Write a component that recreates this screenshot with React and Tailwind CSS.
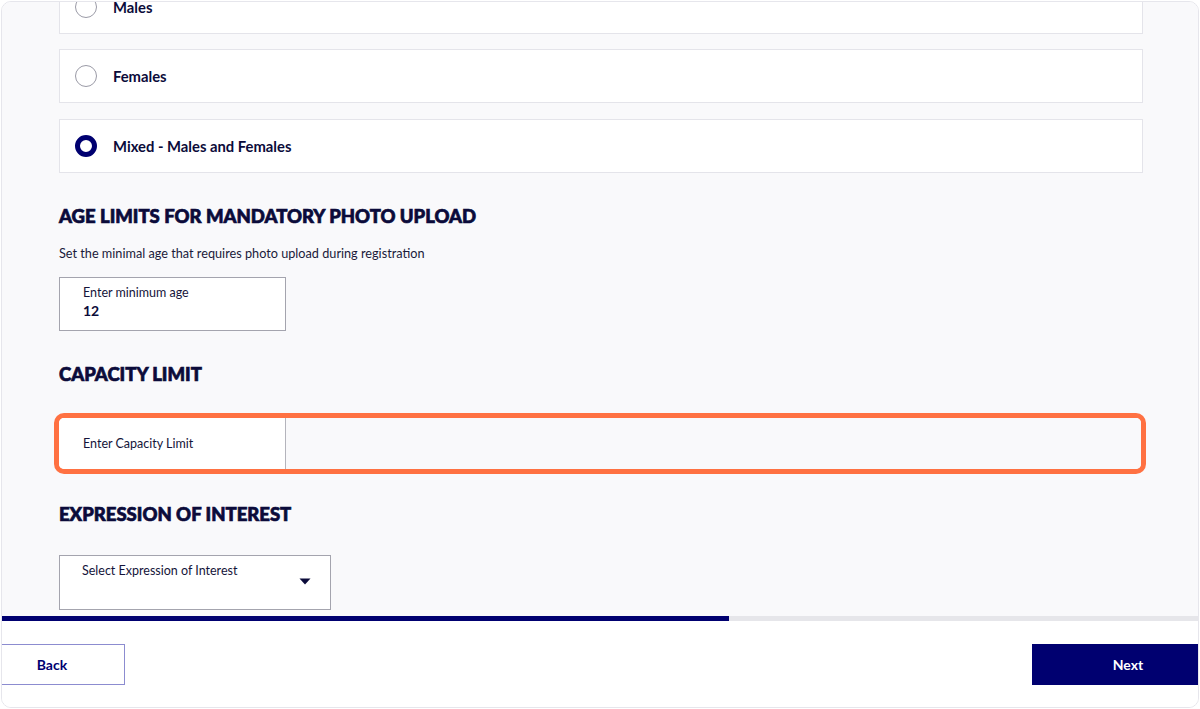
import React from "react";

const font = { fontFamily: "Lato, 'Noto Sans', 'Liberation Sans', sans-serif" };

function RadioCard({ label, selected, className = "" }) {
  return (
    <div className={`h-[54px] bg-white border border-[#e4e4ea] flex items-center pl-[15px] gap-[16px] ${className}`}>
      {selected ? (
        <span className="w-[22px] h-[22px] rounded-full border-[5px] border-[#000070] bg-white shrink-0" />
      ) : (
        <span className="w-[22px] h-[22px] rounded-full border border-[#9a9aa6] bg-white shrink-0" />
      )}
      <span className="text-[14.8px] font-bold text-[#0b0b3a] leading-none">{label}</span>
    </div>
  );
}

function Heading({ children, className = "" }) {
  return (
    <h2
      className={`text-[18.5px] leading-[24px] font-black uppercase text-[#0b0b3a] [-webkit-text-stroke:0.7px_#0b0b3a] ${className}`}
    >
      {children}
    </h2>
  );
}

export default function App() {
  return (
    <div className="w-[1200px] h-[709px] bg-white p-[1px]" style={font}>
      <div className="w-full h-full rounded-[10px] border border-[#e6e6ec] overflow-hidden flex flex-col bg-white">
        <div className="flex-1 overflow-hidden bg-[#f9f9fb] pl-[57px] pr-[55px]">
          <div className="-mt-[22px] flex flex-col">
            <RadioCard label="Males" />
            <RadioCard label="Females" className="mt-[15px]" />
            <RadioCard label="Mixed - Males and Females" selected className="mt-[16px]" />

            <Heading className="mt-[31px]">Age limits for mandatory photo upload</Heading>
            <p className="mt-[17px] text-[12.7px] leading-[16px] text-[#1a1a3a]">
              Set the minimal age that requires photo upload during registration
            </p>
            <div className="mt-[16px] w-[227px] h-[54px] bg-white border border-[#a4a4ae] pl-[23px] pt-[7px] flex flex-col">
              <span className="block text-[12.5px] leading-[16px] text-[#14143a]">Enter minimum age</span>
              <span className="block text-[14px] leading-[20px] font-bold text-[#0b0b3a]">12</span>
            </div>

            <Heading className="mt-[31px]">Capacity limit</Heading>
            <div className="mt-[27px] -ml-[5px] -mr-[3px] border-[5px] border-[#ff7142] rounded-[10px] h-[61px] overflow-hidden flex">
              <div className="w-[227px] bg-white border-r border-[#b4b4bc] flex items-center pl-[24px]">
                <span className="block text-[12.5px] leading-[16px] text-[#14143a]">Enter Capacity Limit</span>
              </div>
              <div className="flex-1 bg-[#f9f9fb]" />
            </div>

            <Heading className="mt-[28px]">Expression of interest</Heading>
            <div className="mt-[29px] relative w-[272px] h-[55px] bg-white border border-[#a4a4ae] pl-[22px] pt-[7px]">
              <span className="block text-[12.5px] leading-[16px] text-[#14143a]">Select Expression of Interest</span>
              <svg className="absolute right-[19px] top-[22px]" width="12" height="7" viewBox="0 0 12 7">
                <path d="M0.5 0.5 L11.5 0.5 L6 6.5 Z" fill="#0b0b3a" />
              </svg>
            </div>
          </div>
        </div>

        <div className="shrink-0 bg-white">
          <div className="h-[5px] bg-[#e6e6ea] flex">
            <div className="w-[727px] h-full bg-[#000070]" />
          </div>
          <div className="h-[86px] flex items-start justify-between pt-[23px]">
            <button className="w-[123px] h-[41px] bg-white border-t border-r border-b border-[#8c8cd0] text-[14px] font-bold text-[#000070] pr-[22px]">
              Back
            </button>
            <button className="w-[166px] h-[41px] bg-[#000070] text-[14px] font-bold text-white pl-[26px]">
              Next
            </button>
          </div>
        </div>
      </div>
    </div>
  );
}
